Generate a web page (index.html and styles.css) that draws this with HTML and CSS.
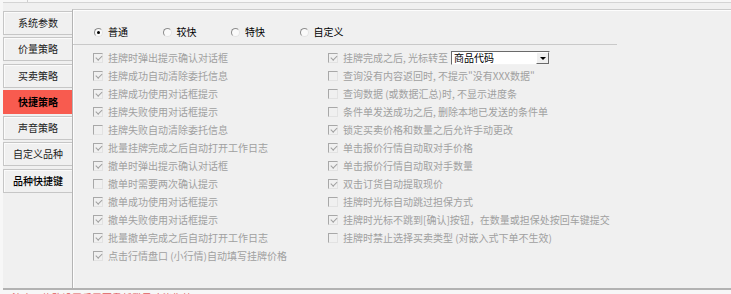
FILE: index.html
```html
<!DOCTYPE html>
<html lang="zh">
<head>
<meta charset="utf-8">
<title>快捷策略</title>
<link rel="stylesheet" href="styles.css">
</head>
<body>
<div class="topbar"><span class="tick"></span></div>
<div class="frame">
  <div class="tabs">
    <div class="tab">系统参数</div>
    <div class="tab">价量策略</div>
    <div class="tab">买卖策略</div>
    <div class="tab active">快捷策略</div>
    <div class="tab">声音策略</div>
    <div class="tab">自定义品种</div>
    <div class="tab strong">品种快捷键</div>
  </div>
  <div class="panel">
    <div class="speed">
      <div class="ritem"><span class="radio on"></span>普通</div>
      <div class="ritem"><span class="radio"></span>较快</div>
      <div class="ritem"><span class="radio"></span>特快</div>
      <div class="ritem"><span class="radio"></span>自定义</div>
    </div>
    <div class="options">
      <div class="col col-left">
        <div class="opt"><span class="cb on"></span>挂牌时弹出提示确认对话框</div>
        <div class="opt"><span class="cb on"></span>挂牌成功自动清除委托信息</div>
        <div class="opt"><span class="cb on"></span>挂牌成功使用对话框提示</div>
        <div class="opt"><span class="cb on"></span>挂牌失败使用对话框提示</div>
        <div class="opt"><span class="cb"></span>挂牌失败自动清除委托信息</div>
        <div class="opt"><span class="cb on"></span>批量挂牌完成之后自动打开工作日志</div>
        <div class="opt"><span class="cb on"></span>撤单时弹出提示确认对话框</div>
        <div class="opt"><span class="cb"></span>撤单时需要两次确认提示</div>
        <div class="opt"><span class="cb on"></span>撤单成功使用对话框提示</div>
        <div class="opt"><span class="cb on"></span>撤单失败使用对话框提示</div>
        <div class="opt"><span class="cb on"></span>批量撤单完成之后自动打开工作日志</div>
        <div class="opt"><span class="cb on"></span>点击行情盘口 (小行情)自动填写挂牌价格</div>
      </div>
      <div class="col">
        <div class="opt"><span class="cb on"></span>挂牌完成之后, 光标转至<span class="combo"><span class="combo-text">商品代码</span><span class="combo-btn"><span class="arrow"></span></span></span></div>
        <div class="opt"><span class="cb"></span>查询没有内容返回时, 不提示"没有XXX数据"</div>
        <div class="opt"><span class="cb"></span>查询数据 (或数据汇总)时, 不显示进度条</div>
        <div class="opt"><span class="cb"></span>条件单发送成功之后, 删除本地已发送的条件单</div>
        <div class="opt"><span class="cb on"></span>锁定买卖价格和数量之后允许手动更改</div>
        <div class="opt"><span class="cb on"></span>单击报价行情自动取对手价格</div>
        <div class="opt"><span class="cb on"></span>单击报价行情自动取对手数量</div>
        <div class="opt"><span class="cb on"></span>双击订货自动提取现价</div>
        <div class="opt"><span class="cb"></span>挂牌时光标自动跳过担保方式</div>
        <div class="opt"><span class="cb on"></span>挂牌时光标不跳到[确认]按钮，在数量或担保处按回车键提交</div>
        <div class="opt"><span class="cb"></span>挂牌时禁止选择买卖类型 (对嵌入式下单不生效)</div>
      </div>
    </div>
  </div>
</div>
<div class="note">注意：修改设置后需要重新登录才能生效</div>
</body>
</html>
```
FILE: styles.css
```css
html, body {
  margin: 0;
  padding: 0;
}
body {
  width: 731px;
  height: 294px;
  overflow: hidden;
  background: #f7f7f7;
  font-family: "Noto Sans CJK SC", "Liberation Sans", sans-serif;
  font-size: 10px;
  line-height: 12px;
}
.topbar {
  height: 2px;
}
.tick {
  display: block;
  margin-left: 27px;
  width: 1px;
  height: 2px;
  background: #cfcfcf;
}
.frame {
  margin-left: 3px;
  height: 288px;
  box-sizing: border-box;
  border-top: 1px solid #d4d4d4;
  border-bottom: 2px solid #b2b2b2;
  background: #f0f0f0;
  display: flex;
}
.tabs {
  width: 69px;
  flex: none;
  padding-top: 8px;
  display: flex;
  flex-direction: column;
  gap: 2.3px;
}
.tab {
  height: 24px;
  box-sizing: border-box;
  border: 1px solid #c6c6c6;
  border-right: none;
  box-shadow: inset 1px 1px #fbfbfb;
  display: flex;
  align-items: center;
  justify-content: center;
  color: #1c1c1c;
}
.tab.active {
  background: #f85b4f;
  border-color: #f85b4f;
  box-shadow: none;
  font-weight: bold;
  color: #000;
}
.tab.strong {
  font-weight: 500;
  color: #000;
}
.panel {
  flex: 1;
  margin-top: 6px;
  border-top: 1px solid #cbcbcb;
  border-left: 1px solid #b4b4b4;
  box-shadow: inset 1px 1px #fdfdfd;
}
.speed {
  width: 544px;
  height: 35px;
  box-sizing: border-box;
  padding: 12px 0 0 21px;
  border-bottom: 1px solid #c9c9c9;
  display: flex;
  gap: 34.5px;
}
.ritem {
  display: flex;
  align-items: center;
  gap: 5px;
  height: 20px;
  color: #000;
}
.radio {
  width: 9px;
  height: 9px;
  box-sizing: border-box;
  border-radius: 50%;
  border: 1px solid;
  border-color: #8c8c8c #e4e4e4 #e4e4e4 #8c8c8c;
  background: #fafafa;
  display: flex;
  align-items: center;
  justify-content: center;
}
.radio.on::after {
  content: "";
  width: 3px;
  height: 3px;
  border-radius: 50%;
  background: #000;
}
.options {
  display: flex;
  padding: 4px 0 0 20px;
}
.col-left {
  width: 235px;
}
.opt {
  height: 18px;
  display: flex;
  align-items: center;
  gap: 5px;
  color: #a0a0a0;
  white-space: nowrap;
}
.cb {
  flex: none;
  width: 10px;
  height: 10px;
  box-sizing: border-box;
  border: 1px solid;
  border-color: #a8a8a8 #e2e2e2 #e2e2e2 #a8a8a8;
  position: relative;
}
.cb.on::after {
  content: "";
  position: absolute;
  left: 2.5px;
  top: 0;
  width: 2.5px;
  height: 5px;
  border: solid #a0a0a0;
  border-width: 0 1.6px 1.6px 0;
  transform: rotate(45deg);
}
.combo {
  margin-left: -2px;
  width: 99px;
  height: 14px;
  box-sizing: border-box;
  border: 1px solid;
  border-color: #6a6a6a #f2f2f2 #f2f2f2 #6a6a6a;
  background: #fff;
  display: flex;
  align-items: center;
  color: #000;
}
.combo-text {
  padding-left: 2px;
}
.combo-btn {
  margin-left: auto;
  width: 13px;
  height: 12px;
  box-sizing: border-box;
  border: 1px solid;
  border-color: #fff #6a6a6a #6a6a6a #fff;
  background: #f0f0f0;
  display: flex;
  align-items: center;
  justify-content: center;
}
.arrow {
  width: 0;
  height: 0;
  border-left: 3px solid transparent;
  border-right: 3px solid transparent;
  border-top: 3px solid #000;
}
.note {
  margin: 2px 0 0 12px;
  color: #e05a5a;
  line-height: 12px;
}
```
